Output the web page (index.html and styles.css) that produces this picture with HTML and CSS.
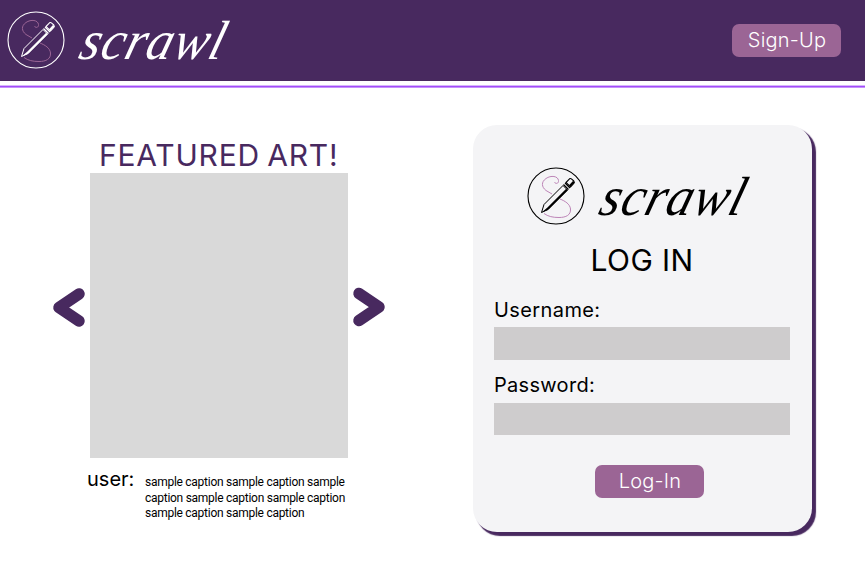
FILE: index.html
```html
<!DOCTYPE html>
<html lang="en">
<head>
<meta charset="utf-8">
<title>scrawl</title>
<link rel="stylesheet" href="styles.css">
</head>
<body>
<svg width="0" height="0" class="defs" aria-hidden="true">
  <symbol id="logo" viewBox="0 0 58 58">
    <circle cx="29" cy="29" r="28" fill="none" stroke="currentColor" stroke-width="1.1"/>
    <path d="M27.500 15C28.500 17.500 32 16.500 31.500 13.500C31 9 24 8 19 11.500C14 15 14.500 20 19 23.500L25 27M33 32C38 34 43 37 43.500 42C44 48 39 50.500 32 50.500C26 50.500 21 49.500 17 46.500" fill="none" class="swirl" stroke-width="1"/>
    <path d="M14.500 45.500L17 37.500L36 18.500L40.500 23L21 42.500Z" class="barrel" stroke="currentColor" stroke-width="1" stroke-linejoin="round"/>
    <path d="M14.500 45.500L20.200 40.700L39.200 21.700L40.800 23.200L21.200 42.700Z" fill="currentColor"/>
    <path d="M36.500 17.500L41.500 22.500M38 16L43 21" fill="none" stroke="currentColor" stroke-width="1.1"/>
    <path d="M39 15.500L42.500 11.800Q43.500 11 45 12.300L46.800 14Q47.800 15.200 47 16.200L43.500 20Z" class="barrel" stroke="currentColor" stroke-width="1.1"/>
    <path d="M42 18.300L46.200 13.800L47.500 15.500L43.500 20Z" fill="currentColor"/>
  </symbol>
</svg>
<header class="topbar">
  <div class="brand light"><svg class="mark"><use href="#logo"/></svg><span class="wordmark">scrawl</span></div>
  <button class="btn">Sign-Up</button>
</header>
<div class="rule"></div>
<main class="page">
  <section class="featured">
    <h1>FEATURED ART!</h1>
    <div class="carousel">
      <svg class="arrow" viewBox="0 0 32 39"><path d="M26 6L6 19.500L26 33"/></svg>
      <div class="art"></div>
      <svg class="arrow" viewBox="0 0 32 39"><path d="M6 5.500L26 19L6 32.500"/></svg>
    </div>
    <div class="caption">
      <span class="user">user:</span>
      <p>sample caption sample caption sample<br>caption sample caption sample caption<br>sample caption sample caption</p>
    </div>
  </section>
  <form class="card">
    <div class="brand dark"><svg class="mark"><use href="#logo"/></svg><span class="wordmark">scrawl</span></div>
    <h2>LOG IN</h2>
    <label for="username">Username:</label>
    <input id="username" type="text">
    <label for="password">Password:</label>
    <input id="password" type="password">
    <button class="btn login" type="button">Log-In</button>
  </form>
</main>
</body>
</html>
```
FILE: styles.css
```css
* { box-sizing: border-box; }
body { margin: 0; width: 865px; height: 561px; overflow: hidden; background: #fff; color: #000; font-family: Inter, "Liberation Sans", sans-serif; }
h1, h2, p { margin: 0; font-weight: 400; white-space: nowrap; }
.defs { display: block; }
.topbar { height: 81px; background: #48295f; display: flex; align-items: flex-start; justify-content: space-between; padding: 0 24px 0 7px; }
.brand { display: flex; }
.light { color: #fff; padding-top: 11px; --fill: #48295f; --swirl: #9b6595; }
.dark { color: #000; --fill: #f4f4f6; --swirl: #bd84b7; }
.mark { width: 58px; height: 58px; flex: none; }
.barrel { fill: var(--fill); }
.swirl { stroke: var(--swirl); }
.wordmark { font: italic 400 52px/58px "Liberation Serif", serif; margin: 2px 0 -2px 12px; letter-spacing: .9px; transform: skewX(-16deg) scaleY(1.06); transform-origin: 0 80%; }
.btn { border: 0; width: 109px; height: 33px; border-radius: 7px; background: #9b6595; color: #fff; font: 300 20px/33px Inter, "Liberation Sans", sans-serif; letter-spacing: .2px; padding: 0 0 0 1px; margin-top: 24px; }
.rule { margin-top: 4px; height: 3px; background: #a24dfa; border-top: 1px solid #d7b5fc; border-bottom: 1px solid #c691fc; }
.page { display: flex; justify-content: space-between; padding: 37px 53px 0 53px; }
.featured { width: 332px; padding-top: 12px; }
h1 { color: #48295f; font-size: 30px; line-height: 36px; padding-left: 46px; letter-spacing: .8px; word-spacing: -2px; }
.carousel { display: flex; justify-content: space-between; align-items: center; height: 285px; }
.arrow { width: 32px; height: 39px; overflow: visible; position: relative; top: -8px; }
.arrow path { fill: none; stroke: #48295f; stroke-width: 11.5; stroke-linecap: round; stroke-linejoin: round; }
.art { width: 258px; height: 285px; background: #d9d9d9; }
.caption { display: flex; padding: 9px 0 0 34px; }
.user { font-size: 20px; line-height: 24px; width: 58px; }
.caption p { font: 400 12px/15.7px Roboto, sans-serif; padding-top: 8px; letter-spacing: -.27px; }
.card { width: 339px; height: 407px; border-radius: 24px; background: #f4f4f6; box-shadow: 3.5px 3.5px 1px #48295f; padding: 42px 22px 0 21px; }
.card .brand { padding-left: 33px; }
h2 { font-size: 30px; line-height: 36px; text-align: center; margin-top: 17px; letter-spacing: .4px; }
label { display: block; font-size: 20px; line-height: 24px; letter-spacing: .4px; margin: 20px 0 5px; }
input { display: block; width: 296px; height: 32.5px; border: 0; background: #cecccd; padding: 0 8px; }
input + label { letter-spacing: .3px; margin: 13px 0 6px; }
.login { display: block; margin: 30px auto 0 101px; }
```
